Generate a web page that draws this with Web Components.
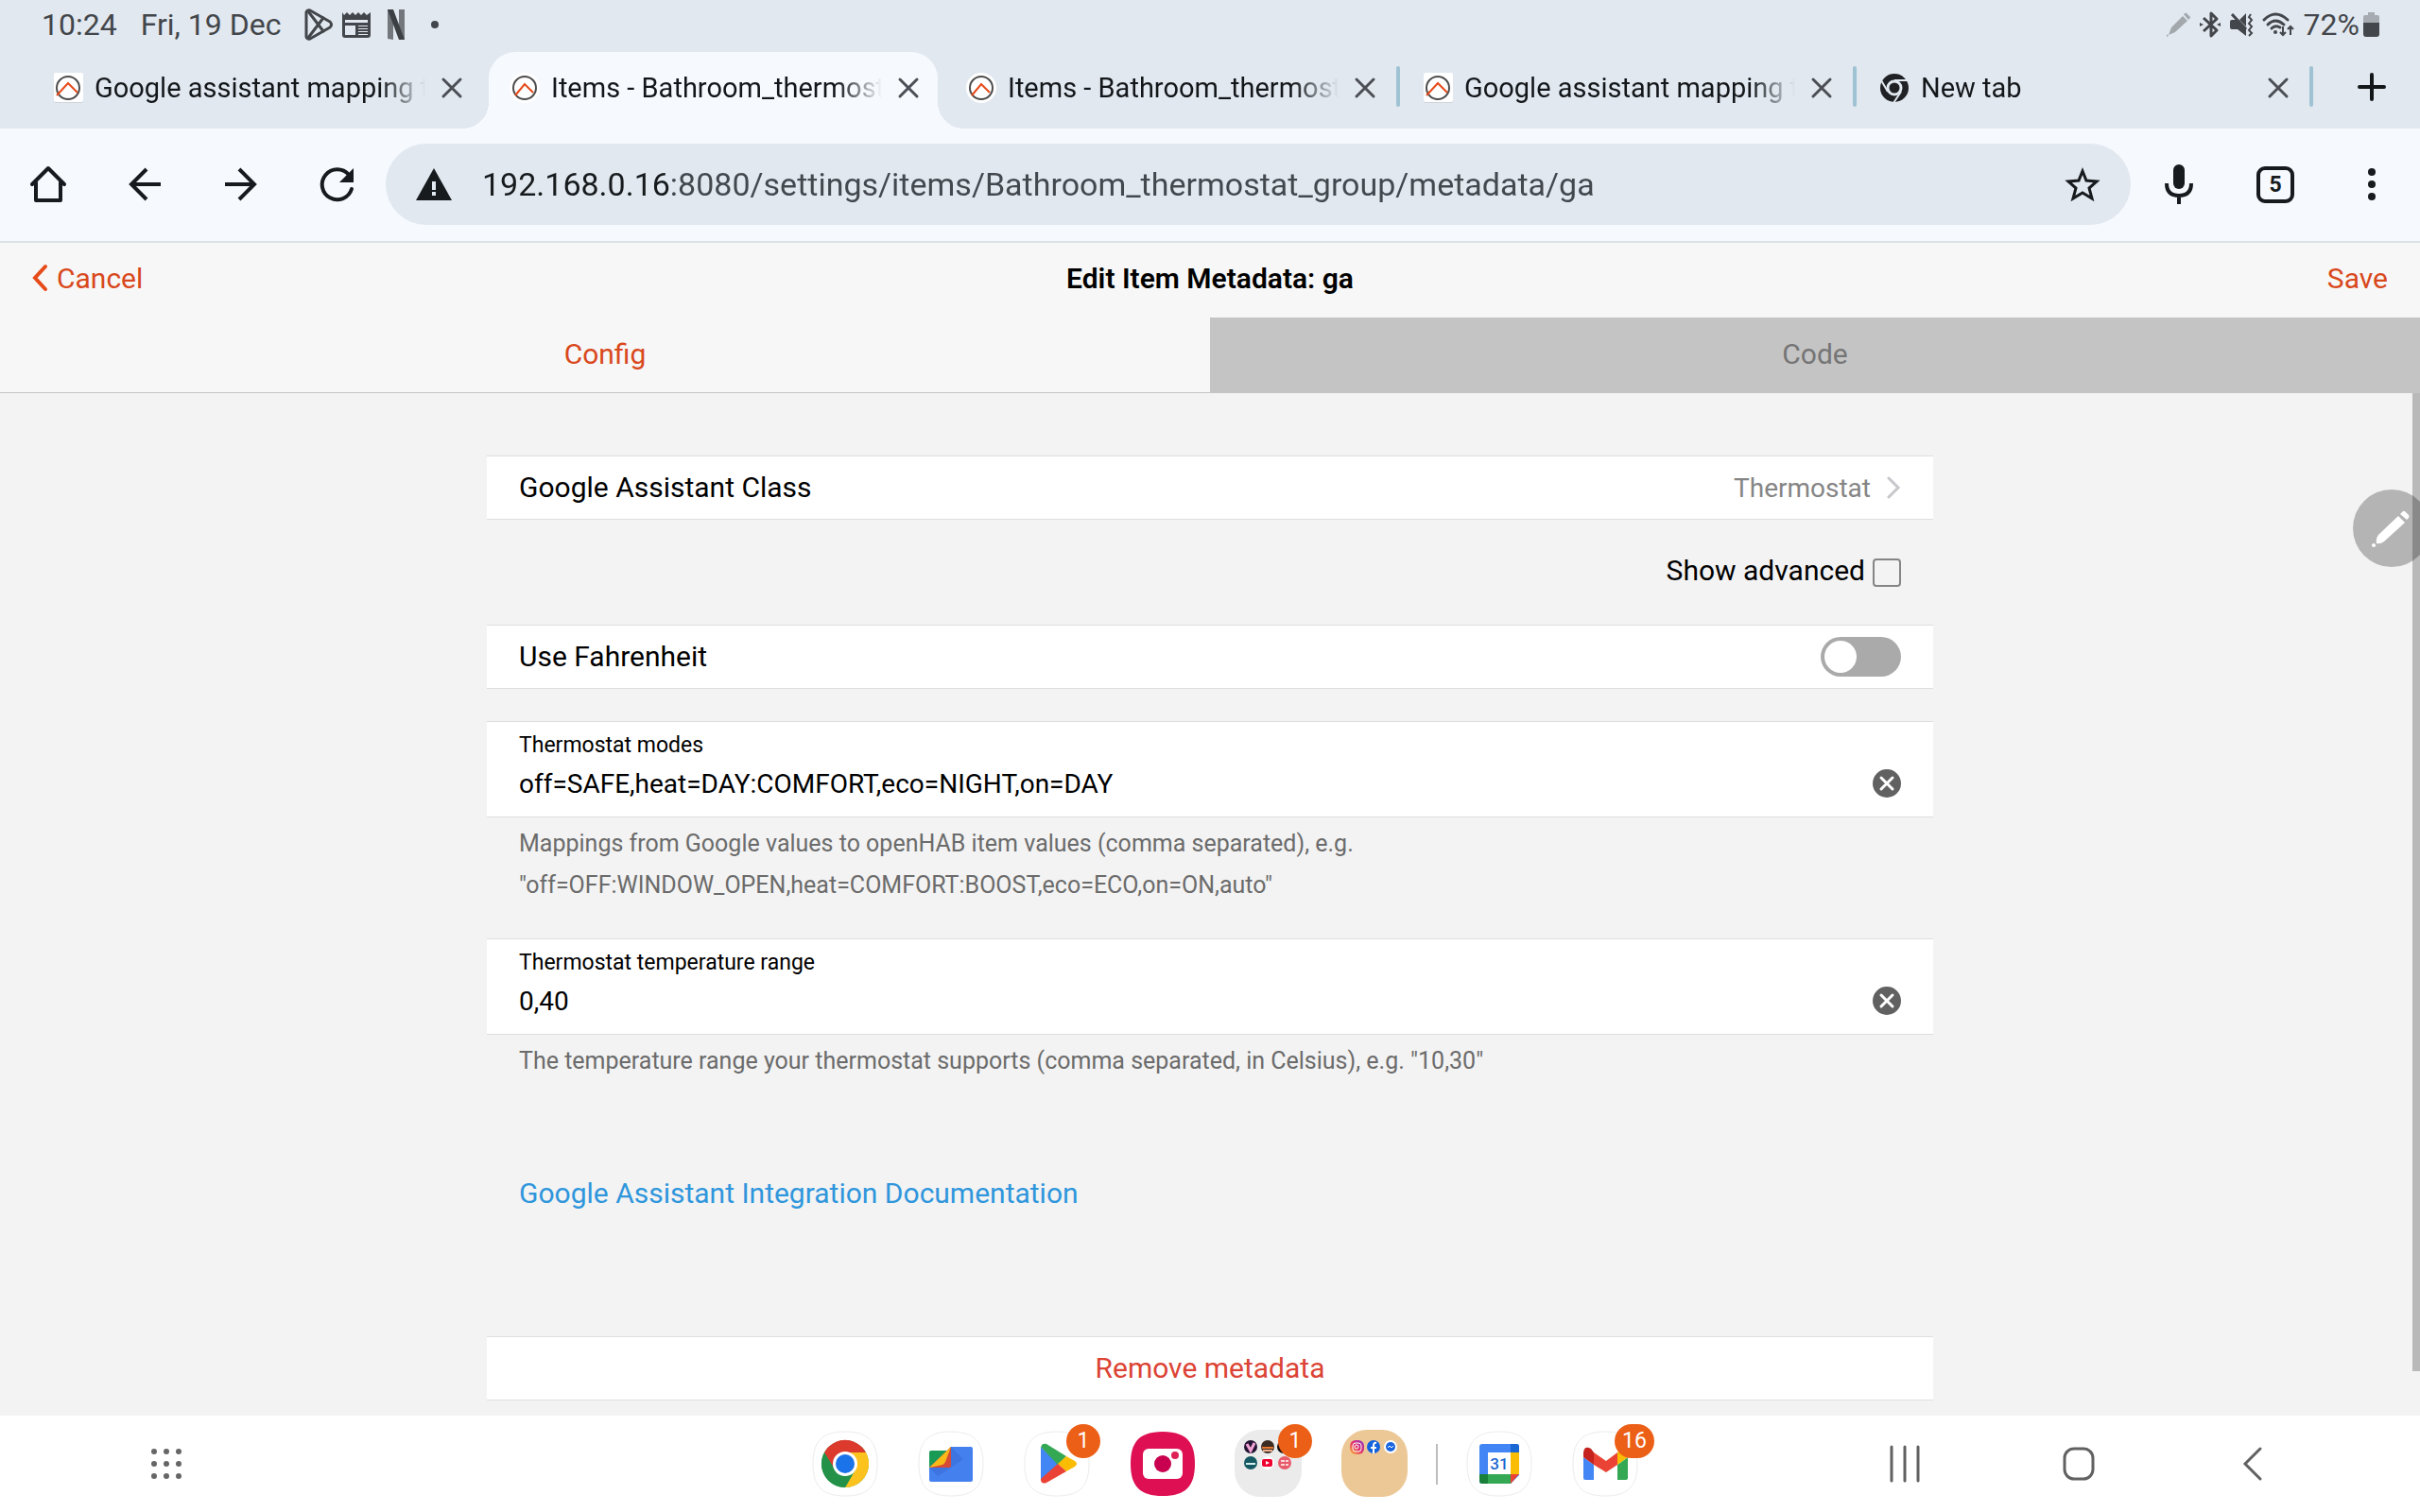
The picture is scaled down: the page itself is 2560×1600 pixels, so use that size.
<!DOCTYPE html>
<html lang="en">
<head>
<meta charset="utf-8">
<title>Items - Bathroom_thermostat_group</title>
<style>
    html, body {
        margin: 0;
        min-height: 100vh;
    }

    body {
        display: flex;
        flex-direction: column;
        background: #f3f3f3;
        color: #000;
        font-family: Roboto, "Liberation Sans", sans-serif;
        font-size: 30px;
    }

    main {
        position: relative;
        flex: 1;
        padding: 66px 0 16px;
    }

    /* scroll position indicator */
    .thumb {
        position: absolute;
        top: 0;
        right: 0;
        bottom: 47px;
        width: 8px;
        background: #b9b9b9;
    }
</style>
</head>
<body>
    <status-bar></status-bar>

    <tab-strip>
        <browser-tab icon="openhab-square">Google assistant mapping t</browser-tab>
        <browser-tab icon="openhab" active>Items - Bathroom_thermost</browser-tab>
        <browser-tab icon="openhab">Items - Bathroom_thermost</browser-tab>
        <browser-tab icon="openhab-square" divided>Google assistant mapping t</browser-tab>
        <browser-tab icon="chrome-mono" divided>New tab</browser-tab>
    </tab-strip>

    <browser-toolbar value="192.168.0.16:8080/settings/items/Bathroom_thermostat_group/metadata/ga"></browser-toolbar>

    <page-navbar>Edit Item Metadata: ga</page-navbar>

    <main>
        <metadata-form></metadata-form>
        <div class="thumb"></div>
    </main>

    <system-dock></system-dock>
    <pen-button></pen-button>

<script>
const SQUIRCLE = 'M34 0C58 0 68 10 68 34S58 68 34 68 0 58 0 34 10 0 34 0Z';
const PLATE = `<path d="${SQUIRCLE}" fill="#fff" stroke="#ececec"/>`;

// [width, height, markup]; the viewBox has the same size
const ICONS = {
    'play-outline': [30, 34, `<g fill="none" stroke="#43464a" stroke-width="3" stroke-linejoin="round" stroke-linecap="round"><path d="M2 4Q3 1 6 2L27 14Q30 17 27 20L6 32Q3 33 2 30Z"/><path d="M4 3 20 24M4 31 20 10"/></g>`],
    'news': [30, 27, `<path fill="#43464a" d="M0 0 2 3 5 0 8 3 11 0 14 3 17 0 20 3 23 0 26 3 30 0V24Q30 27 27 27H3Q0 27 0 24Z"/><path fill="#e1e8f0" d="M3 8H27V11H3ZM3 14H14V24H3ZM17 14H27V15H17ZM17 17H27V18H17ZM17 20H27V21H17ZM17 23H27V24H17Z"/>`],
    'netflix': [28, 32, `<path fill="#73777c" d="M8 0H14V32L8 31ZM20 0H26V32L20 31Z"/><path fill="#3c3f43" d="M8 0H14L26 32H20Z"/>`],
    'dot': [10, 10, `<circle cx="5" cy="5" r="4" fill="#43464a"/>`],
    'pencil-small': [26, 26, `<g fill="#a3a8ad"><path d="M18 4 23 9 10 21 3 24 6 16Z"/><path d="M19 2Q21 0 22 1L26 5Q26 6 24 8Z"/><path d="M1 23 3 25 1 26Z"/></g>`],
    'bluetooth': [22, 26, `<path fill="none" stroke="#43464a" stroke-width="3" stroke-linejoin="round" d="M4 6 18 19 12 25V1L18 7 4 20"/><path fill="#43464a" d="M0 11 4 13 0 15ZM22 11 18 13 22 15Z"/>`],
    'mute': [24, 26, `<path fill="#43464a" d="M0 10Q0 8 2 8H7L17 18V25L8 18H2Q0 18 0 16ZM10 8 17 1V15Z"/><path fill="none" stroke="#43464a" stroke-width="3" d="M2 2 17 18"/><path fill="none" stroke="#43464a" stroke-width="2" d="M22 2 20 5 23 8 20 12 23 15 20 19 23 22 20 25"/>`],
    'wifi': [34, 26, `<g fill="none" stroke="#43464a" stroke-width="3" stroke-linecap="round"><path d="M2 8Q14-4 27 8"/><path d="M6 13Q14 5 23 13"/><path d="M10 17Q14 13 19 16"/></g><circle cx="14" cy="21" r="2" fill="#43464a"/><path fill="none" stroke="#43464a" stroke-width="2" d="M22 15V24M19 21 22 24 25 21M30 24V15M27 18 30 15 33 18"/>`],
    'battery': [18, 26, `<path fill="#a6abb1" d="M5 0H12V3H15Q17 3 17 5V12H0V5Q0 3 2 3H5Z"/><path fill="#43464a" d="M0 11H17V23Q17 26 14 26H3Q0 26 0 23Z"/>`],
    'openhab': [34, 34, `<circle cx="17" cy="17" r="16" fill="#fff"/><circle cx="17" cy="17" r="12" fill="none" stroke="#4d4d4d" stroke-width="2"/><path fill="none" stroke="#e64a19" stroke-width="2" d="M7 25 17 13 26 22"/>`],
    'openhab-square': [34, 34, `<rect x="2" y="2" width="31" height="31" rx="2" fill="#cdd3da"/><rect x="2" y="1" width="31" height="31" rx="2" fill="#fff"/><circle cx="17" cy="17" r="12" fill="none" stroke="#4d4d4d" stroke-width="2"/><path fill="none" stroke="#e64a19" stroke-width="2" d="M5 25 17 12 27 22"/>`],
    'chrome-mono': [34, 34, `<circle cx="17" cy="17" r="15" fill="#1f2124"/><circle cx="17" cy="17" r="7" fill="none" stroke="#e1e8f0" stroke-width="3"/><path fill="none" stroke="#e1e8f0" stroke-width="2" d="M17 9H31M24 21 16 33M10 21 3 9"/>`],
    'close': [22, 22, `<path fill="none" stroke="#4b4e54" stroke-width="3" stroke-linecap="round" d="M2 2 20 20M20 2 2 20"/>`],
    'plus': [30, 30, `<path fill="none" stroke="#14171a" stroke-width="4" stroke-linecap="round" d="M15 2V28M2 15H28"/>`],
    'home': [40, 40, `<path fill="none" stroke="#171b1e" stroke-width="4" stroke-linejoin="round" stroke-linecap="round" d="M3 20 20 3 37 20M7 18V37H33V18"/>`],
    'back': [34, 36, `<path fill="none" stroke="#171b1e" stroke-width="4" d="M19 2 3 18 19 34M3 18H34"/>`],
    'forward': [34, 36, `<path fill="none" stroke="#171b1e" stroke-width="4" d="M15 2 31 18 15 34M31 18H0"/>`],
    'reload': [36, 36, `<path fill="none" stroke="#171b1e" stroke-width="4" stroke-linecap="round" d="M33 23A16 16 0 1 1 30 8"/><path fill="#171b1e" d="M35 1V16H20Z"/>`],
    'warning': [38, 34, `<path fill="#171b1e" d="M19 0 38 34H0Z"/><path fill="#e1e8f0" d="M17 14H21V23H17ZM17 25H21V29H17Z"/>`],
    'star': [38, 36, `<path fill="none" stroke="#171b1e" stroke-width="3" d="M19 4 23 14 34 15 26 22 29 33 19 27 9 33 12 22 4 15 15 14Z"/>`],
    'mic': [30, 42, `<rect x="9" y="0" width="12" height="26" rx="6" fill="#171b1e"/><path fill="none" stroke="#171b1e" stroke-width="4" d="M2 20Q2 33 15 33T28 20M15 33V42"/>`],
    'more': [10, 38, `<g fill="#171b1e"><circle cx="5" cy="6" r="4"/><circle cx="5" cy="19" r="4"/><circle cx="5" cy="32" r="4"/></g>`],
    'chevron-left': [17, 28, `<path fill="none" stroke="#e64a19" stroke-width="4" stroke-linecap="round" d="M14 2 3 14 14 26"/>`],
    'chevron-right': [14, 24, `<path fill="none" stroke="#c7c7cc" stroke-width="3" stroke-linecap="round" d="M2 2 12 12 2 22"/>`],
    'clear': [30, 30, `<circle cx="15" cy="15" r="15" fill="#616161"/><path fill="none" stroke="#fff" stroke-width="3" stroke-linecap="round" d="M9 9 21 21M21 9 9 21"/>`],
    'pencil': [42, 42, `<g fill="#fff"><path d="M28 8 35 15 13 35Q9 38 5 37 4 32 7 28Z"/><path d="M30 6 33 3Q34 2 36 4L39 7Q40 8 39 10L37 12Z"/><circle cx="2" cy="39" r="2"/></g>`],
    'grid': [34, 34, `<g fill="#666"><circle cx="4" cy="4" r="3"/><circle cx="17" cy="4" r="3"/><circle cx="30" cy="4" r="3"/><circle cx="4" cy="17" r="3"/><circle cx="17" cy="17" r="3"/><circle cx="30" cy="17" r="3"/><circle cx="4" cy="30" r="3"/><circle cx="17" cy="30" r="3"/><circle cx="30" cy="30" r="3"/></g>`],
    'recents': [32, 42, `<path fill="none" stroke="#616161" stroke-width="3" stroke-linecap="round" d="M2 3V39M16 3V39M30 3V39"/>`],
    'home-key': [34, 42, `<rect x="2" y="5" width="30" height="32" rx="10" fill="none" stroke="#616161" stroke-width="3"/>`],
    'back-key': [20, 42, `<path fill="none" stroke="#616161" stroke-width="3" stroke-linecap="round" d="M18 5 2 21 18 37"/>`],

    'chrome': [68, 68, `${PLATE}<g transform="translate(34 34)"><circle r="25" fill="#34a853"/><path fill="#db3a2c" d="M22-12A25 25 0 0 0-22-12L-11 6 0-12Z"/><path fill="#fcc31e" d="M22-12A25 25 0 0 1 0 25L11 6 0-12Z"/><path fill="#239148" d="M0 25A25 25 0 0 1-22-12L-11 6 11 6Z"/><circle r="13" fill="#fff"/><circle r="10" fill="#1a73e8"/></g>`],
    'files': [68, 68, `${PLATE}<rect x="11" y="20" width="24" height="20" rx="2" fill="#199b55"/><path fill="#4480ee" d="M34 16H55Q57 16 57 18V51Q57 53 55 53H13Q11 53 11 51V38Z"/><path fill="#3568d2" d="M34 16 47 29 34 38 20 47 11 38Z" opacity=".5"/><path fill="#d64a37" d="M34 16V36Q34 38 32 38H11Z"/><path fill="#fbb917" d="M34 16 28 32Q27 34 25 35L11 38Z"/>`],
    'play': [68, 68, `${PLATE}<path fill="#4285f4" d="M17 16V52L36 34Z"/><path fill="#34a853" d="M17 18Q17 12 23 13L44 26 35 35 17 16Z"/><path fill="#fbbc04" d="M44 26 53 31Q57 34 53 37L44 42 35 34Z"/><path fill="#ea4335" d="M44 42 23 54Q17 56 17 50L35 34Z"/>`],
    'camera': [68, 68, `<path d="${SQUIRCLE}" fill="#de0f52"/><rect x="13" y="18" width="42" height="32" rx="6" fill="#fff"/><circle cx="34" cy="34" r="9" fill="#c8004f"/><circle cx="47" cy="25" r="4" fill="#de2255"/>`],
    'folder-media': [68, 68, `<rect x="-2" y="-2" width="71" height="71" rx="27" fill="#ebebeb"/><circle cx="15" cy="16" r="7" fill="#241433"/><path fill="none" stroke="#f3a6d6" stroke-width="3" d="M11 13 15 20 19 12"/><circle cx="33" cy="16" r="7" fill="#3a2b23"/><path stroke="#e9772e" stroke-width="2" d="M27 17H39"/><path stroke="#f0b28f" stroke-width="2" d="M28 20H38"/><circle cx="50" cy="16" r="7" fill="#0b0b0d"/><circle cx="15" cy="33" r="7" fill="#155a63"/><path stroke="#d5eeee" stroke-width="2" d="M10 34H20"/><circle cx="33" cy="33" r="7" fill="#fff"/><rect x="27" y="29" width="11" height="8" rx="2" fill="#f00030"/><path fill="#fff" d="M31 31 35 33 31 35Z"/><circle cx="51" cy="33" r="7" fill="#e85b6b"/><path stroke="#fbd5d8" stroke-width="2" stroke-dasharray="4 1" d="M47 31H55M47 35H55"/>`],
    'folder-social': [68, 68, `<rect x="-1" y="-2" width="70" height="71" rx="27" fill="#edc897"/><defs><linearGradient id="ig" x1="0" y1="1" x2="1" y2="0"><stop offset="0" stop-color="#fdc02f"/><stop offset=".5" stop-color="#e1306c"/><stop offset="1" stop-color="#8a3ac8"/></linearGradient></defs><rect x="8" y="9" width="15" height="15" rx="6" fill="url(#ig)"/><rect x="11" y="12" width="9" height="9" rx="3" fill="none" stroke="#fff"/><circle cx="15" cy="16" r="2" fill="none" stroke="#fff"/><circle cx="33" cy="16" r="7" fill="#1263dd"/><path fill="none" stroke="#fff" stroke-width="2" d="M36 12Q33 11 33 15V23M30 17H36"/><circle cx="51" cy="16" r="7" fill="#fff"/><circle cx="51" cy="16" r="5" fill="#1b66e0"/><path fill="none" stroke="#fff" d="M48 17 50 15 52 17 54 15"/>`],
    'calendar': [68, 68, `${PLATE}<rect x="13" y="13" width="42" height="42" rx="3" fill="#4285f4"/><path fill="#1967d2" d="M46 13H52Q55 13 55 16V22H46Z"/><path fill="#fbbc04" d="M46 22H55V45H46Z"/><path fill="#34a853" d="M22 45H46V55H22Z"/><path fill="#188038" d="M13 45H22V55H16Q13 55 13 52Z"/><path fill="#fff" d="M22 22H46V45H22ZM46 55H56V45Z"/><path fill="#ea4335" d="M46 45H55L46 55Z"/><text x="34" y="40" text-anchor="middle" font-family="Roboto, sans-serif" font-weight="500" font-size="17" fill="#1967d2">31</text>`],
    'gmail': [68, 68, `${PLATE}<path fill="#4285f4" d="M11 27 22 35V51H13Q11 51 11 49Z"/><path fill="#34a853" d="M58 27 47 35V51H56Q58 51 58 49Z"/><path fill="#fbbc04" d="M47 22 53 18Q58 17 58 22V27L47 35Z"/><path fill="#ea4335" d="M22 22 35 31 47 22V35L35 43 22 35Z"/><path fill="#c5221f" d="M22 22V35L11 27V22Q12 14 19 18Z"/>`]
};

class UiIcon extends HTMLElement {
    constructor() {
        super();
        this.attachShadow({ mode: 'open' });
    }

    connectedCallback() {
        const [w, h, body] = ICONS[this.getAttribute('name')];
        this.shadowRoot.innerHTML = `
        <style>
            :host { display: block; flex: none; }
            svg { display: block; overflow: visible; }
        </style>
        <svg width="${w}" height="${h}" viewBox="0 0 ${w} ${h}" aria-hidden="true">${body}</svg>
        `;
    }
}

class StatusBar extends HTMLElement {
    constructor() {
        super();
        this.attachShadow({ mode: 'open' });
        this.shadowRoot.innerHTML = `
        <style>
            :host {
                display: flex;
                align-items: center;
                justify-content: space-between;
                height: 52px;
                padding: 0 42px 3px 44px;
                background: #e1e8f0;
                color: #43464a;
                font-size: 32px;
            }

            .group {
                display: flex;
                align-items: center;
            }

            .left { gap: 25px; }
            .notices { display: flex; align-items: center; gap: 10px; }
            .right { gap: 10px; }
            .power { display: flex; align-items: center; gap: 4px; }
        </style>
        <div class="group left">
            <time>10:24</time>
            <span>Fri, 19 Dec</span>
            <div class="notices">
                <ui-icon name="play-outline"></ui-icon>
                <ui-icon name="news"></ui-icon>
                <ui-icon name="netflix"></ui-icon>
            </div>
            <ui-icon name="dot"></ui-icon>
        </div>
        <div class="group right">
            <ui-icon name="pencil-small"></ui-icon>
            <ui-icon name="bluetooth"></ui-icon>
            <ui-icon name="mute"></ui-icon>
            <ui-icon name="wifi"></ui-icon>
            <div class="power"><span>72%</span><ui-icon name="battery"></ui-icon></div>
        </div>
        `;
    }
}

class TabStrip extends HTMLElement {
    constructor() {
        super();
        this.attachShadow({ mode: 'open' });
        this.shadowRoot.innerHTML = `
        <style>
            :host {
                display: flex;
                height: 81px;
                padding-left: 30px;
                background: #e1e8f0;
            }

            .add {
                position: relative;
                display: flex;
                justify-content: center;
                align-items: center;
                width: 115px;
                border: 0;
                padding: 0 0 8px 12px;
                background: none;
            }

            .add::before {
                content: "";
                position: absolute;
                left: -2px;
                top: 15px;
                width: 4px;
                height: 43px;
                border-radius: 2px;
                background: #9fc3d3;
            }
        </style>
        <slot></slot>
        <button class="add" aria-label="New tab"><ui-icon name="plus"></ui-icon></button>
        `;
    }
}

class BrowserTab extends HTMLElement {
    constructor() {
        super();
        this.attachShadow({ mode: 'open' });
    }

    connectedCallback() {
        this.shadowRoot.innerHTML = `
        <style>
            :host {
                position: relative;
                display: flex;
                flex: 1;
                min-width: 0;
                color: #14171a;
                font-size: 29px;
            }

            .tab {
                position: relative;
                display: flex;
                flex: 1;
                align-items: center;
                min-width: 0;
                margin: 0 4px;
                padding: 0 11px 6px 21px;
                border-radius: 28px 28px 0 0;
            }

            :host([active]) .tab { background: #f6f9fe; }

            /* curved feet of the selected tab */
            :host([active]) .tab::before,
            :host([active]) .tab::after {
                content: "";
                position: absolute;
                bottom: 0;
                width: 28px;
                height: 28px;
            }

            :host([active]) .tab::before {
                right: 100%;
                background: radial-gradient(circle at 0 0, transparent 28px, #f6f9fe 28px);
            }

            :host([active]) .tab::after {
                left: 100%;
                background: radial-gradient(circle at 100% 0, transparent 28px, #f6f9fe 28px);
            }

            :host([divided])::before {
                content: "";
                position: absolute;
                left: -2px;
                top: 15px;
                width: 4px;
                height: 43px;
                border-radius: 2px;
                background: #9fc3d3;
            }

            button {
                border: 0;
                padding: 0;
                background: none;
                color: inherit;
                font: inherit;
            }

            .title {
                display: flex;
                flex: 1;
                align-items: center;
                gap: 11px;
                min-width: 0;
            }

            .text {
                flex: 1;
                overflow: hidden;
                white-space: nowrap;
                text-align: left;
                line-height: 40px;
                -webkit-mask-image: linear-gradient(to right, #000 calc(100% - 56px), transparent calc(100% - 8px));
                mask-image: linear-gradient(to right, #000 calc(100% - 56px), transparent calc(100% - 8px));
            }

            .close {
                display: flex;
                justify-content: center;
                width: 40px;
            }
        </style>
        <div class="tab">
            <button class="title">
                <ui-icon name="${this.getAttribute('icon')}"></ui-icon>
                <span class="text"><slot></slot></span>
            </button>
            <button class="close" aria-label="Close tab"><ui-icon name="close"></ui-icon></button>
        </div>
        `;
    }
}

class BrowserToolbar extends HTMLElement {
    constructor() {
        super();
        this.attachShadow({ mode: 'open' });
    }

    connectedCallback() {
        this.shadowRoot.innerHTML = `
        <style>
            :host {
                display: flex;
                align-items: center;
                padding: 16px 0 17px;
                border-bottom: 2px solid #dce2e8;
                background: #f6f9fe;
                color: #171b1e;
            }

            button {
                display: flex;
                justify-content: center;
                align-items: center;
                border: 0;
                padding: 0;
                background: none;
                color: inherit;
                font: inherit;
            }

            .tool {
                flex: none;
                width: 102px;
                height: 86px;
            }

            .address {
                display: flex;
                flex: 1;
                align-items: center;
                gap: 32px;
                min-width: 0;
                height: 86px;
                padding: 0 32px;
                border-radius: 43px;
                background: #e1e8f0;
            }

            /* the host part is darker than the path */
            input {
                flex: 1;
                min-width: 0;
                height: 60px;
                border: 0;
                padding: 0;
                outline: 0;
                color: #43484e;
                font: inherit;
                font-size: 34px;
                background: linear-gradient(to right, #171b1e 198px, #43484e 198px);
                -webkit-background-clip: text;
                background-clip: text;
                -webkit-text-fill-color: transparent;
            }

            .count {
                display: grid;
                place-items: center;
                width: 32px;
                height: 31px;
                border: 4px solid #171b1e;
                border-radius: 9px;
                font-size: 23px;
                font-weight: 700;
            }
        </style>
        <button class="tool" aria-label="Home"><ui-icon name="home"></ui-icon></button>
        <button class="tool" aria-label="Back"><ui-icon name="back"></ui-icon></button>
        <button class="tool" aria-label="Forward"><ui-icon name="forward"></ui-icon></button>
        <button class="tool" aria-label="Reload"><ui-icon name="reload"></ui-icon></button>
        <div class="address">
            <ui-icon name="warning"></ui-icon>
            <input type="text" aria-label="Address" spellcheck="false" value="${this.getAttribute('value')}">
            <button aria-label="Bookmark"><ui-icon name="star"></ui-icon></button>
        </div>
        <button class="tool" aria-label="Voice search"><ui-icon name="mic"></ui-icon></button>
        <button class="tool" aria-label="Open tabs"><span class="count">5</span></button>
        <button class="tool" aria-label="Menu"><ui-icon name="more"></ui-icon></button>
        `;
    }
}

class PageNavbar extends HTMLElement {
    constructor() {
        super();
        this.attachShadow({ mode: 'open' });
        this.shadowRoot.innerHTML = `
        <style>
            :host {
                display: block;
                background: #f7f7f7;
                border-bottom: 1px solid #c4c4c4;
            }

            .bar {
                display: grid;
                grid-template-columns: 1fr auto 1fr;
                align-items: center;
                height: 74px;
                padding: 0 34px 5px;
            }

            a {
                display: flex;
                align-items: center;
                gap: 9px;
                color: #d9481c;
                text-decoration: none;
            }

            .save { justify-self: end; }

            h1 {
                margin: 0;
                font-size: 30px;
                font-weight: 600;
            }

            .tabs { display: flex; }

            .tabs button {
                flex: 1;
                height: 79px;
                border: 0;
                padding: 0 0 2px;
                background: none;
                color: #d9481c;
                font: inherit;
            }

            .tabs .off {
                background: #c4c4c4;
                color: #757575;
            }
        </style>
        <div class="bar">
            <a href="#"><ui-icon name="chevron-left"></ui-icon>Cancel</a>
            <h1><slot></slot></h1>
            <a href="#" class="save">Save</a>
        </div>
        <div class="tabs">
            <button>Config</button>
            <button class="off">Code</button>
        </div>
        `;
    }
}

class ListCard extends HTMLElement {
    constructor() {
        super();
        this.attachShadow({ mode: 'open' });
        this.shadowRoot.innerHTML = `
        <style>
            :host {
                display: block;
                background: #fff;
                border: solid #dedede;
                border-width: 1px 0;
            }
        </style>
        <slot></slot>
        `;
    }
}

class TextField extends HTMLElement {
    constructor() {
        super();
        this.attachShadow({ mode: 'open' });
    }

    connectedCallback() {
        this.shadowRoot.innerHTML = `
        <style>
            :host { display: block; }

            .field {
                display: flex;
                flex-direction: column;
                gap: 6px;
                padding: 11px 34px 15px;
            }

            label {
                font-size: 23px;
                line-height: 28px;
            }

            .row {
                display: flex;
                align-items: center;
            }

            input {
                flex: 1;
                min-width: 0;
                height: 40px;
                border: 0;
                padding: 0;
                outline: 0;
                background: none;
                color: #000;
                font: inherit;
                font-size: 28px;
            }

            button {
                border: 0;
                padding: 0;
                background: none;
            }

            .hint {
                padding: 6px 34px 0;
                color: #6b6b6b;
                font-size: 25px;
                line-height: 44px;
            }
        </style>
        <list-card>
            <div class="field">
                <label for="value">${this.getAttribute('label')}</label>
                <div class="row">
                    <input id="value" type="text" spellcheck="false">
                    <button aria-label="Clear"><ui-icon name="clear"></ui-icon></button>
                </div>
            </div>
        </list-card>
        <div class="hint"><slot></slot></div>
        `;
        const input = this.shadowRoot.querySelector('input');
        input.value = this.getAttribute('value');
        this.shadowRoot.querySelector('button').addEventListener('click', () => {
            input.value = '';
            input.focus();
        });
    }
}

class MetadataForm extends HTMLElement {
    constructor() {
        super();
        this.attachShadow({ mode: 'open' });
        this.shadowRoot.innerHTML = `
        <style>
            :host {
                display: block;
                max-width: 1530px;
                margin: 0 auto;
            }

            .item {
                display: flex;
                align-items: center;
                justify-content: space-between;
                height: 66px;
                padding: 0 34px;
                color: #000;
                text-decoration: none;
            }

            .item .label { padding-bottom: 2px; }

            .after {
                display: flex;
                align-items: center;
                gap: 17px;
                color: #858585;
                font-size: 28px;
            }

            .after ui-icon { margin-right: 1px; }

            .advanced {
                display: flex;
                align-items: center;
                justify-content: flex-end;
                gap: 8px;
                height: 111px;
                padding: 0 34px;
            }

            .advanced label { padding-bottom: 4px; }

            .advanced input {
                appearance: none;
                width: 30px;
                height: 30px;
                margin: 0;
                border: 2px solid #858585;
                border-radius: 4px;
            }

            .advanced input:checked { background: #858585; }

            .switch {
                appearance: none;
                width: 85px;
                height: 42px;
                margin: 0;
                padding: 4px;
                border-radius: 21px;
                background: #aaa;
            }

            .switch::before {
                content: "";
                display: block;
                width: 34px;
                height: 34px;
                border-radius: 50%;
                background: #fff;
            }

            .switch:checked { background: #e64a19; }
            .switch:checked::before { margin-left: auto; }

            text-field { margin-top: 34px; }

            .doc {
                display: block;
                margin: 96px 34px 129px;
                line-height: 44px;
                color: #2f96dc;
                text-decoration: none;
            }

            .remove {
                display: block;
                width: 100%;
                height: 66px;
                border: 0;
                padding: 0 0 2px;
                background: none;
                color: #dc4334;
                font: inherit;
            }
        </style>
        <list-card>
            <a class="item" href="#">
                <span class="label">Google Assistant Class</span>
                <span class="after">Thermostat <ui-icon name="chevron-right"></ui-icon></span>
            </a>
        </list-card>
        <div class="advanced">
            <label for="advanced">Show advanced</label>
            <input id="advanced" type="checkbox">
        </div>
        <list-card>
            <div class="item">
                <label class="label" for="fahrenheit">Use Fahrenheit</label>
                <input id="fahrenheit" class="switch" type="checkbox" role="switch">
            </div>
        </list-card>
        <text-field label="Thermostat modes" value="off=SAFE,heat=DAY:COMFORT,eco=NIGHT,on=DAY">Mappings from Google values to openHAB item values (comma separated), e.g.<br>"off=OFF:WINDOW_OPEN,heat=COMFORT:BOOST,eco=ECO,on=ON,auto"</text-field>
        <text-field label="Thermostat temperature range" value="0,40">The temperature range your thermostat supports (comma separated, in Celsius), e.g. "10,30"</text-field>
        <a class="doc" href="#">Google Assistant Integration Documentation</a>
        <list-card>
            <button class="remove">Remove metadata</button>
        </list-card>
        `;
    }
}

class DockApp extends HTMLElement {
    constructor() {
        super();
        this.attachShadow({ mode: 'open' });
    }

    connectedCallback() {
        const badge = this.getAttribute('badge');
        this.shadowRoot.innerHTML = `
        <style>
            :host { display: block; }

            button {
                position: relative;
                display: block;
                border: 0;
                padding: 0;
                background: none;
                font: inherit;
            }

            .badge {
                position: absolute;
                left: 44px;
                top: -8px;
                box-sizing: border-box;
                min-width: 36px;
                padding: 0 8px;
                border-radius: 18px;
                background: #ec5f16;
                color: #fff;
                font-size: 23px;
                line-height: 36px;
                text-align: center;
            }
        </style>
        <button aria-label="${this.getAttribute('label')}">
            <ui-icon name="${this.getAttribute('icon')}"></ui-icon>
            ${badge ? `<span class="badge">${badge}</span>` : ''}
        </button>
        `;
    }
}

class SystemDock extends HTMLElement {
    constructor() {
        super();
        this.attachShadow({ mode: 'open' });
        this.shadowRoot.innerHTML = `
        <style>
            :host {
                display: grid;
                grid-template-columns: 1fr auto 1fr;
                align-items: center;
                height: 102px;
                padding-left: 32px;
                background: #fff;
            }

            .apps, .keys {
                display: flex;
                align-items: center;
            }

            .apps { gap: 44px; }

            .center {
                display: flex;
                align-items: center;
                gap: 31px;
            }

            .line {
                width: 2px;
                height: 43px;
                background: #bdbdbd;
            }

            .keys {
                justify-content: flex-end;
                padding-right: 85px;
            }

            .key {
                display: flex;
                justify-content: center;
                width: 184px;
                border: 0;
                padding: 0;
                background: none;
            }

            .all {
                width: 64px;
                margin-left: 112px;
            }
        </style>
        <button class="key all" aria-label="All apps"><ui-icon name="grid"></ui-icon></button>
        <div class="center">
            <div class="apps">
                <dock-app icon="chrome" label="Chrome"></dock-app>
                <dock-app icon="files" label="Files"></dock-app>
                <dock-app icon="play" label="Play Store" badge="1"></dock-app>
                <dock-app icon="camera" label="Camera"></dock-app>
                <dock-app icon="folder-media" label="Media folder" badge="1"></dock-app>
                <dock-app icon="folder-social" label="Social folder"></dock-app>
            </div>
            <div class="line"></div>
            <div class="apps">
                <dock-app icon="calendar" label="Calendar"></dock-app>
                <dock-app icon="gmail" label="Gmail" badge="16"></dock-app>
            </div>
        </div>
        <div class="keys">
            <button class="key" aria-label="Recents"><ui-icon name="recents"></ui-icon></button>
            <button class="key" aria-label="Home"><ui-icon name="home-key"></ui-icon></button>
            <button class="key" aria-label="Back"><ui-icon name="back-key"></ui-icon></button>
        </div>
        `;
    }
}

// floating pen, partly off the right edge
class PenButton extends HTMLElement {
    constructor() {
        super();
        this.attachShadow({ mode: 'open' });
        this.shadowRoot.innerHTML = `
        <style>
            :host {
                position: fixed;
                top: 518px;
                right: 0;
                width: 71px;
                height: 86px;
                overflow: hidden;
            }

            button {
                display: grid;
                place-items: center;
                width: 82px;
                height: 82px;
                border: 0;
                padding: 0;
                border-radius: 50%;
                background: rgba(0, 0, 0, 0.26);
            }
        </style>
        <button aria-label="Pen"><ui-icon name="pencil"></ui-icon></button>
        `;
    }
}

customElements.define('ui-icon', UiIcon);
customElements.define('status-bar', StatusBar);
customElements.define('tab-strip', TabStrip);
customElements.define('browser-tab', BrowserTab);
customElements.define('browser-toolbar', BrowserToolbar);
customElements.define('page-navbar', PageNavbar);
customElements.define('list-card', ListCard);
customElements.define('text-field', TextField);
customElements.define('metadata-form', MetadataForm);
customElements.define('dock-app', DockApp);
customElements.define('system-dock', SystemDock);
customElements.define('pen-button', PenButton);
</script>
</body>
</html>
